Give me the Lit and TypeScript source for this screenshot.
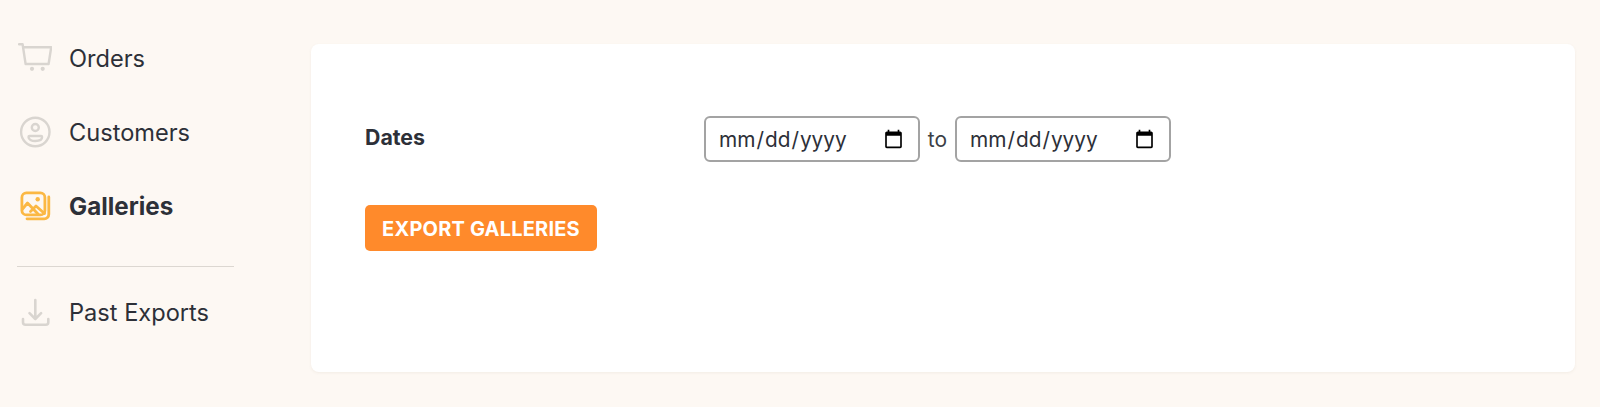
import { LitElement, html, css, svg } from "lit";
import { customElement } from "lit/decorators.js";

const icons = {
  cart: svg`<g fill="none" stroke="#d9d5d0" stroke-width="2.4" stroke-linecap="round" stroke-linejoin="round"><path d="M1 2.2h3.6l3 19.8h23l2.6-16.8H5"/></g><circle cx="14" cy="26.8" r="2.1" fill="#d9d5d0"/><circle cx="24.7" cy="26.8" r="2.1" fill="#d9d5d0"/>`,
  user: svg`<g fill="none" stroke="#d9d5d0" stroke-width="2.4"><circle cx="17.3" cy="16" r="14.2"/><circle cx="17.3" cy="11.5" r="3.5"/><path d="M11.5 20h11.6a1 1 0 0 1 1 1c0 2.6-3 4-6.8 4s-6.8-1.400-6.800-4a1 1 0 0 1 1-1z" stroke-linejoin="round"/></g>`,
  gallery: svg`<g fill="none" stroke="#fbb844" stroke-width="2.800" stroke-linejoin="round" stroke-linecap="round"><path d="M30.800 7v17.300a4.500 4.500 0 0 1-4.500 4.500H9"/><rect x="3.900" y="2.900" width="23" height="22" rx="4.500"/><path d="M4.500 19l5-6 10.500 11M12.500 21.500l5.500-5.500 8.500 7.500"/></g><circle cx="19.700" cy="9.300" r="2.200" fill="#fbb844"/>`,
  download: svg`<g fill="none" stroke="#d9d5d0" stroke-width="2.600" stroke-linecap="round" stroke-linejoin="round"><path d="M17.300 4v19M11.500 17.200l5.800 5.800 5.800-5.800"/><path d="M5 23v3.300a2.500 2.500 0 0 0 2.500 2.500h20.300a2.500 2.500 0 0 0 2.500-2.500V23"/></g>`,
};

@customElement("app-root")
export class AppRoot extends LitElement {
  static styles = css`
    :host {
      display: block;
      height: 407px;
      background: #fdf8f3;
      font-family: Inter, "Liberation Sans", sans-serif;
      color: #2d3038;
      overflow: hidden;
    }
    .page {
      display: flex;
      align-items: flex-start;
      padding-top: 42px;
    }
    nav {
      width: 217px;
      margin-left: 17px;
      margin-right: 77px;
      flex: none;
    }
    .item {
      display: flex;
      align-items: center;
      gap: 17px;
      height: 34px;
      font-size: 23.6px;
      line-height: 34px;
      margin-bottom: 40px;
    }
    .item svg { width: 34px; height: 34px; flex: none; margin-left: 1px; }
    .item.active { font-weight: 700; font-size: 24.200px; }
    .rule {
      height: 1px;
      background: #dcd7d1;
      margin: 42px 0 29px;
    }
    .card {
      flex: none;
      box-sizing: border-box;
      width: 1264px;
      height: 328px;
      margin-top: 2px;
      background: #fff;
      border-radius: 8px;
      padding: 72px 54px 0;
      box-shadow: 0 1px 3px rgba(120, 100, 80, 0.08);
    }
    .row {
      display: flex;
      align-items: center;
      height: 46px;
    }
    .label {
      width: 339px;
      font-size: 21.300px;
      font-weight: 700;
      position: relative;
      top: -2px;
    }
    input {
      box-sizing: border-box;
      width: 216px;
      height: 46px;
      padding: 0 12px;
      border: 2px solid #a3a3a3;
      border-radius: 6px;
      background: #fff;
      font-family: Inter, "Liberation Sans", sans-serif;
      font-size: 20.800px;
      color: #2d3038;
    }
    .to {
      width: 35px;
      text-align: center;
      font-size: 21px;
      color: #3c3f46;
    }
    button {
      display: block;
      margin-top: 43px;
      box-sizing: border-box;
      width: 232px;
      height: 46px;
      border: none;
      border-radius: 5px;
      background: #ff8a2b;
      color: #fff;
      font-family: Inter, "Liberation Sans", sans-serif;
      font-size: 20px;
      font-weight: 700;
      letter-spacing: 0.2px;
      padding: 1px 0 0;
    }
  `;

  private nav(icon: unknown, label: string, active = false) {
    return html`<div class="item ${active ? "active" : ""}">
      <svg viewBox="0 0 34 34">${icon}</svg><span>${label}</span>
    </div>`;
  }

  render() {
    return html`<div class="page">
      <nav>
        ${this.nav(icons.cart, "Orders")}
        ${this.nav(icons.user, "Customers")}
        ${this.nav(icons.gallery, "Galleries", true)}
        <div class="rule"></div>
        ${this.nav(icons.download, "Past Exports")}
      </nav>
      <main class="card">
        <div class="row">
          <span class="label">Dates</span>
          <input type="date" aria-label="From" />
          <span class="to">to</span>
          <input type="date" aria-label="To" />
        </div>
        <button>EXPORT GALLERIES</button>
      </main>
    </div>`;
  }
}
